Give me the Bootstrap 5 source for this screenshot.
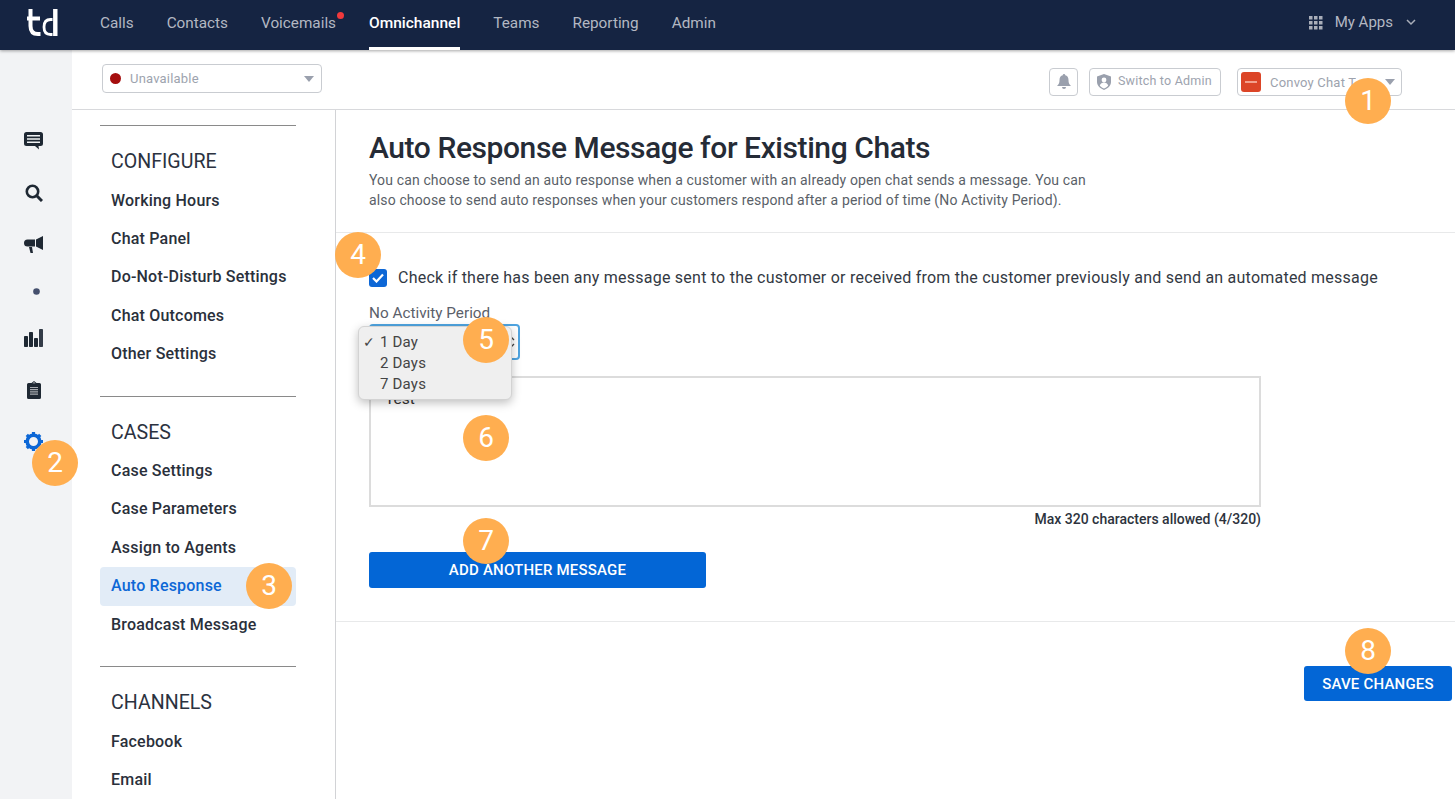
<!DOCTYPE html>
<html lang="en"><head><meta charset="utf-8"><title>Auto Response</title>
<link href="https://cdn.jsdelivr.net/npm/bootstrap@5.3.0/dist/css/bootstrap.min.css" rel="stylesheet">
<script src="https://cdn.jsdelivr.net/npm/bootstrap@5.3.0/dist/js/bootstrap.bundle.min.js"></script>
<style>
html,body{height:799px;overflow:hidden}
body{font-family:Roboto,"Liberation Sans",sans-serif;color:#212833;background:#fff;position:relative}
.app-top{height:50px;background:#152442;box-shadow:0 1px 3px rgba(0,0,0,.35);position:relative;z-index:2;padding:0}
.logo-box{width:100px;padding-left:27px;margin-top:-5px}
.top-link{color:#b3b8c2;font-size:15.3px;line-height:46px;height:50px;padding:0;margin-right:33px;text-decoration:none;position:relative;display:block}
.top-link.on{color:#fff;font-weight:500;font-size:15.5px;border-bottom:3px solid #fff}
.red-dot{position:absolute;width:7px;height:7px;border-radius:50%;background:#f0393c;right:-8px;top:12px}
.apps{color:#b3b8c2;font-size:15px;margin-right:39px;margin-top:-5px}
.apps-grid{margin-right:12px}
.apps-chev{margin-left:13px}
.shell{height:749px}
.rail{width:72px;background:#f2f3f5;flex:none}
.rail-gap{height:65px}
.rail-slot{height:52px;display:flex;align-items:center;justify-content:center;padding-right:5px}
.rail-dot{height:41px;padding-right:0}
.rail-clip{height:51px}
.status-bar{height:60px;flex:none;border-bottom:1px solid #d8d9dc;padding:0 53px 0 30px}
.status-sel{width:220px;height:29px;border:1px solid #c9ccd1;border-radius:4px;font-size:13px;color:#9da3ae;padding:0 7px;margin-bottom:2px;letter-spacing:.2px}
.status-sel span:nth-child(2){margin-top:1px}
.dot-red{width:11px;height:11px;border-radius:50%;background:#a50e0e;margin-right:9px}
.caret-d{width:0;height:0;border-left:5px solid transparent;border-right:5px solid transparent;border-top:6px solid #9aa0ad;margin-left:auto}
.tool-btn{height:28px;border:1px solid #c9ccd1;border-radius:4px;font-size:12.5px;color:#9da3ae;margin-top:4px;letter-spacing:.2px}
.bell-btn{width:29px;margin-right:11px}
.swap-btn{width:132px;padding-left:7px}
.swap-ico{margin-right:7px}
.team-sel{width:165px;padding:0 6px 0 3px;margin-left:16px}
.team-name{margin-left:9px;font-size:13px;margin-top:2px;white-space:nowrap;overflow:hidden}
.body-row{flex:1;min-height:0}
.side{width:264px;flex:none;border-right:1px solid #d2d3d6;padding:15px 39px 0 28px}
.side-sec{border-top:1px solid #8a8a8a;padding-top:17px;height:270.5px}
.side-sec:last-child{height:auto}
.side-head{font-size:19.6px;line-height:38px;height:38px;padding-left:11px;color:#2b3240;margin-bottom:.5px}
.side-link{display:block;font-size:16px;font-weight:500;line-height:38.4px;height:38.4px;padding-left:11px;color:#2a303b;text-decoration:none;border-radius:4px;letter-spacing:.2px}
.side-link.on{background:#e2ecf7;color:#0d67d6}
.pane{flex:1;min-width:0}
.pane-head{height:123px;border-bottom:1px solid #e8e9ea;padding:22px 0 0 33px}
.pane-head h1{font-size:30px;font-weight:500;line-height:32px;margin:0 0 6px;color:#252b36;letter-spacing:-.42px}
.pane-head p{font-size:14px;line-height:20px;width:740px;margin:0;color:#5a5f68;letter-spacing:.14px}
.pane-form{height:389px;border-bottom:1px solid #e8e9ea;padding:33px 0 0 33px;position:relative}
.chk-box{width:18px;height:18px;border-radius:3px;background:#0d67d6;flex:none;margin-right:11px}
.chk-row{font-size:16px;line-height:24px;height:24px;color:#333943;margin-bottom:13px;letter-spacing:.23px;white-space:nowrap}
.lbl{font-size:15.3px;line-height:20px;color:#5b606a;margin-bottom:1px}
.sel-box{width:151px;height:36px;border:2px solid #4fa4e0;border-radius:4px;margin-bottom:16px}
.ta-box{width:892px;height:131px;border:2px solid #dcdcdc;padding:11px 14px;font-size:15.5px;line-height:20px;color:#333;resize:none;display:block;outline:0;font-family:inherit}
.count{width:892px;text-align:right;font-size:14px;font-weight:500;line-height:16px;margin-top:4px;color:#2d333d;margin-bottom:25px}
.act-btn{background:#0366d6;border:0;border-radius:3px;color:#fff;font-size:15px;font-weight:500;line-height:20px;padding:0;text-transform:uppercase;display:block;letter-spacing:.2px}
.add-btn{width:337px;height:36px}
.save-btn{width:148px;height:35px;padding-top:1px}
.pane-foot{padding:44px 3px 0 0}
.sys-menu{position:absolute;left:358px;top:326px;width:154px;height:74px;background:#efefef;border:1px solid #d3d3d3;border-radius:6px;box-shadow:0 3px 10px rgba(0,0,0,.25);z-index:3;font-size:15px;color:#444;padding:5px 0 0 21px;line-height:21px;letter-spacing:.2px}
.sys-menu .tick{position:absolute;left:4px;font-size:14px}
.pin{position:absolute;width:46px;height:46px;border-radius:50%;background:#ffae50;color:#fff;font-size:28px;line-height:46px;text-align:center;z-index:5}
.sel-arrows{margin-left:auto;margin-right:3px;margin-top:10px}
</style></head>
<body>
<nav class="app-top d-flex align-items-center">
  <div class="logo-box d-flex"><svg width="31" height="28" viewBox="0 0 31 28" fill="none" stroke="#fff" stroke-width="4"><path d="M3.500 0V17Q3.500 25 11 25H13.500"/><path d="M0 9.500H13"/><path d="M28.300 0V27" stroke-width="4.400"/><path d="M25.500 10.500H23.500Q17 10.500 17 18Q17 25.500 23.500 25.500H25.500" stroke-width="2.800"/></svg></div>
  <a class="top-link" href="#">Calls</a>
  <a class="top-link" href="#">Contacts</a>
  <a class="top-link" href="#">Voicemails<span class="red-dot"></span></a>
  <a class="top-link on" href="#">Omnichannel</a>
  <a class="top-link" href="#">Teams</a>
  <a class="top-link" href="#">Reporting</a>
  <a class="top-link" href="#">Admin</a>
  <div class="apps ms-auto d-flex align-items-center">
    <svg class="apps-grid" width="14" height="14" viewBox="0 0 14 14" fill="#a9aeb9"><rect width="3.500" height="3.500"/><rect x="5" width="3.500" height="3.500"/><rect x="10" width="3.500" height="3.500"/><rect y="5" width="3.500" height="3.500"/><rect x="5" y="5" width="3.500" height="3.500"/><rect x="10" y="5" width="3.500" height="3.500"/><rect y="10" width="3.500" height="3.500"/><rect x="5" y="10" width="3.500" height="3.500"/><rect x="10" y="10" width="3.500" height="3.500"/></svg>
    <span>My Apps</span>
    <svg class="apps-chev" width="10" height="7" viewBox="0 0 10 7" fill="none" stroke="#a9aeb9" stroke-width="1.500"><path d="M1 1l4 4 4-4"/></svg>
  </div>
</nav>
<div class="shell d-flex">
  <aside class="rail">
    <div class="rail-gap"></div>
    <div class="rail-slot"><svg width="19" height="18" viewBox="0 0 19 18"><path fill="#1f2833" d="M2.500 0h14A2.500 2.500 0 0 1 19 2.500v9a2.500 2.500 0 0 1-2.500 2.500H14.500l.5 3.500L11 14H2.500A2.500 2.500 0 0 1 0 11.500v-9A2.500 2.500 0 0 1 2.500 0z"/><path stroke="#f2f3f5" stroke-width="1.400" d="M3 3.800h13M3 7h13M3 10.200h13"/></svg></div>
    <div class="rail-slot"><svg width="18" height="18" viewBox="0 0 18 18" fill="none" stroke="#1f2833"><circle cx="7.500" cy="7.500" r="5.700" stroke-width="2.600"/><path d="M12 12l5 5" stroke-width="3"/></svg></div>
    <div class="rail-slot"><svg width="19" height="18" viewBox="0 0 19 18" fill="#1f2833"><path d="M19 0v14l-7-3.500v-7z"/><path d="M3.500 3.500H11v7H3.500A3.500 3.500 0 0 1 3.500 3.500z"/><path d="M5 11h3l1 6H6.500z"/></svg></div>
    <div class="rail-slot rail-dot"><svg width="7" height="7"><circle cx="3.500" cy="3.500" r="3.300" fill="#454f6d"/></svg></div>
    <div class="rail-slot"><svg width="19" height="18" viewBox="0 0 19 18" fill="#1f2833"><rect y="7" width="4" height="11" rx=".8"/><rect x="5" y="3" width="4" height="15" rx=".8"/><rect x="10" y="9" width="4" height="9" rx=".8"/><rect x="15" width="4" height="18" rx=".8" fill="#333b47"/></svg></div>
    <div class="rail-slot rail-clip"><svg width="14" height="18" viewBox="0 0 14 18"><path fill="#1f2833" d="M1.500 2H4.500L7 0l2.500 2h3A1.500 1.500 0 0 1 14 3.500v13a1.500 1.500 0 0 1-1.500 1.500h-11A1.500 1.500 0 0 1 0 16.500v-13A1.500 1.500 0 0 1 1.500 2z"/><path fill="#f2f3f5" d="M5.500 2.300h3L7 1.200z"/><path stroke="#a8aab0" stroke-width="1.200" d="M3 6.500h8M3 8.700h8M3 10.900h8M3 13.100h8"/></svg></div>
    <div class="rail-slot"><svg width="19" height="19" viewBox="0 0 19 19"><circle cx="9.500" cy="9.500" r="6.300" fill="none" stroke="#0d67d6" stroke-width="3.600"/><g stroke="#0d67d6" stroke-width="3.200"><path d="M9.500 0v3M9.500 16v3M0 9.500h3M16 9.500h3M2.800 2.800l2 2M14.200 14.200l2 2M2.800 16.200l2-2M14.200 4.800l2-2"/></g></svg></div>
  </aside>
  <div class="flex-grow-1 d-flex flex-column" style="min-width:0">
    <div class="status-bar d-flex align-items-center">
      <div class="status-sel d-flex align-items-center"><span class="dot-red"></span><span>Unavailable</span><span class="caret-d"></span></div>
      <div class="ms-auto d-flex align-items-center">
        <div class="tool-btn bell-btn d-flex align-items-center justify-content-center"><svg width="14" height="15" viewBox="0 0 14 15" fill="#9aa0ad"><path d="M7 0a1.200 1.200 0 0 1 1.200 1.300C10.300 1.800 11.500 3.500 11.500 6c0 3 .7 4.300 2.500 6H0c1.800-1.700 2.500-3 2.500-6 0-2.500 1.200-4.200 3.300-4.700A1.200 1.200 0 0 1 7 0z"/><path d="M5 13h4a2 2 0 0 1-4 0z"/></svg></div>
        <div class="tool-btn swap-btn d-flex align-items-center"><svg class="swap-ico" width="14" height="16" viewBox="0 0 14 16"><path fill="#9aa0ad" d="M7 0l7 2.500V8c0 3.500-3 6.500-7 8-4-1.500-7-4.500-7-8V2.500z"/><circle cx="7" cy="6" r="2.400" fill="#fff"/><path fill="#fff" d="M2.800 11.500c.6-2 2.300-3 4.200-3s3.600 1 4.200 3c-1 1.300-2.500 2.300-4.200 3-1.700-.7-3.200-1.700-4.200-3z"/></svg><span>Switch to Admin</span></div>
        <div class="tool-btn team-sel d-flex align-items-center"><svg width="20" height="20" viewBox="0 0 20 20"><rect width="20" height="20" rx="3" fill="#dc4527"/><rect x="4" y="9" width="12" height="2" fill="#f3a08c"/></svg><span class="team-name">Convoy Chat T</span><span class="caret-d"></span></div>
      </div>
    </div>
    <div class="body-row d-flex">
      <div class="side">
        <div class="side-sec">
          <div class="side-head">CONFIGURE</div>
          <a class="side-link" href="#">Working Hours</a><a class="side-link" href="#">Chat Panel</a><a class="side-link" href="#">Do-Not-Disturb Settings</a><a class="side-link" href="#">Chat Outcomes</a><a class="side-link" href="#">Other Settings</a>
        </div>
        <div class="side-sec">
          <div class="side-head">CASES</div>
          <a class="side-link" href="#">Case Settings</a><a class="side-link" href="#">Case Parameters</a><a class="side-link" href="#">Assign to Agents</a><a class="side-link on" href="#">Auto Response</a><a class="side-link" href="#">Broadcast Message</a>
        </div>
        <div class="side-sec">
          <div class="side-head">CHANNELS</div>
          <a class="side-link" href="#">Facebook</a><a class="side-link" href="#">Email</a>
        </div>
      </div>
      <main class="pane">
        <div class="pane-head">
          <h1>Auto Response Message for Existing Chats</h1>
          <p>You can choose to send an auto response when a customer with an already open chat sends a message. You can also choose to send auto responses when your customers respond after a period of time (No Activity Period).</p>
        </div>
        <div class="pane-form">
          <div class="chk-row d-flex align-items-center"><span class="chk-box d-flex align-items-center justify-content-center"><svg width="12" height="10" viewBox="0 0 12 10" fill="none" stroke="#fff" stroke-width="2.200"><path d="M1 5l3.500 3.500L11 1.500"/></svg></span>Check if there has been any message sent to the customer or received from the customer previously and send an automated message</div>
          <div class="lbl">No Activity Period</div>
          <div class="sel-box d-flex"><svg class="sel-arrows" width="7" height="12" viewBox="0 0 7 12" fill="none" stroke="#444" stroke-width="1.300"><path d="M1 4l2.500-2.500L6 4M1 8l2.500 2.500L6 8"/></svg></div>
          <textarea class="ta-box" aria-label="Message">Test</textarea>
          <div class="count">Max 320 characters allowed (4/320)</div>
          <button class="act-btn add-btn">Add another message</button>
        </div>
        <div class="pane-foot d-flex justify-content-end"><button class="act-btn save-btn">Save changes</button></div>
      </main>
    </div>
  </div>
</div>
<div class="sys-menu"><div><span class="tick">✓</span>1 Day</div><div>2 Days</div><div>7 Days</div></div>
<span class="pin" style="left:1345px;top:78px">1</span>
<span class="pin" style="left:32px;top:440px">2</span>
<span class="pin" style="left:246px;top:563px">3</span>
<span class="pin" style="left:335px;top:232px">4</span>
<span class="pin" style="left:463px;top:317px">5</span>
<span class="pin" style="left:463px;top:415px">6</span>
<span class="pin" style="left:463px;top:518px">7</span>
<span class="pin" style="left:1345px;top:628px">8</span>
</body></html>
